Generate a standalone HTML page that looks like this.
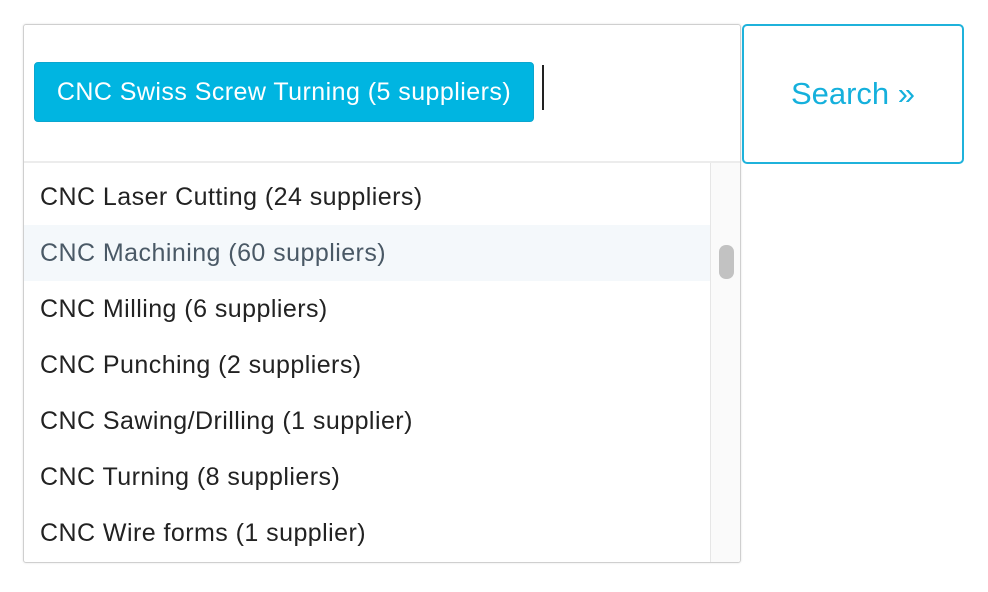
<!DOCTYPE html>
<html><head><style>
body{margin:0;width:988px;height:592px;background:#fff;font-family:"Liberation Sans",sans-serif;position:relative;overflow:hidden}
.box{position:absolute;left:23px;top:24px;width:716px;height:537px;border:1px solid #cfcfcf;border-radius:3px;box-shadow:0 0 2px rgba(0,0,0,.12);overflow:hidden}
.top{position:absolute;left:0;top:0;width:716px;height:136px;border-bottom:2px solid #ececec}
.tag{position:absolute;left:10px;top:37px;width:500px;height:60px;background:#00b5e1;border-radius:4px;color:#fff;font-size:25px;letter-spacing:0.45px;line-height:58px;text-align:center;border:1px solid #0aa6cf;box-sizing:border-box}
.cur{position:absolute;left:518px;top:40px;width:2px;height:45px;background:#222}
.list{position:absolute;left:0;top:138px;width:686px}
.it{height:56px;line-height:56px;padding-left:16px;font-size:25px;letter-spacing:0.45px;color:#222}
.it.h{background:#f4f8fb;color:#4a5966}
.sb{position:absolute;left:686px;top:138px;width:30px;height:400px;background:#fafafa;border-left:1px solid #e6e6e6}
.th{position:absolute;left:8px;top:82px;width:15px;height:34px;background:#c2c2c2;border-radius:7px}
.btn{position:absolute;left:742px;top:24px;width:218px;height:136px;border:2px solid #1fb2db;border-radius:5px;color:#15b0dc;font-size:31px;text-align:center;line-height:136px}
</style></head><body>
<div class="box">
<div class="top"><div class="tag">CNC Swiss Screw Turning (5 suppliers)</div><div class="cur"></div></div>
<div class="list" style="top:144px">
<div class="it">CNC Laser Cutting (24 suppliers)</div>
<div class="it h">CNC Machining (60 suppliers)</div>
<div class="it">CNC Milling (6 suppliers)</div>
<div class="it">CNC Punching (2 suppliers)</div>
<div class="it">CNC Sawing/Drilling (1 supplier)</div>
<div class="it">CNC Turning (8 suppliers)</div>
<div class="it">CNC Wire forms (1 supplier)</div>
</div>
<div class="sb"><div class="th"></div></div>
</div>
<div class="btn">Search »</div>
</body></html>
